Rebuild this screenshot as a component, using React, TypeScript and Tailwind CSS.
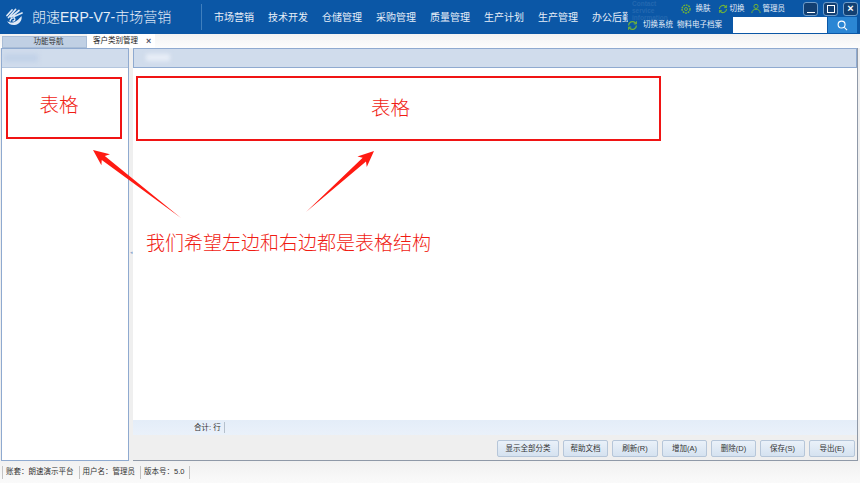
import React from "react";

const nav = ["市场营销", "技术开发", "仓储管理", "采购管理", "质量管理", "生产计划", "生产管理", "办公后勤"];
const btns: [string, number][] = [
  ["显示全部分类", 62], ["帮助文档", 45], ["刷新(R)", 46], ["增加(A)", 45], ["删除(D)", 45], ["保存(S)", 45], ["导出(E)", 46],
];
const font = { fontFamily: '"Liberation Sans","Noto Sans CJK SC",sans-serif' };

function Logo() {
  return (
    <svg width="18" height="18" viewBox="0 0 18 18" fill="none" stroke="#dfe9f6" strokeLinecap="round">
      <path d="M1 7.500L6 2M2.500 9.500L9.500 1.500M5 9L13 2.500M8 8.500L16 5" strokeWidth="1.700" />
      <path d="M15.500 8c1 4-2 8.500-7 9-3.500.3-6.500-1.500-7.500-4 2 1.500 5 2 7.500 1 2.500-1 4.500-3 7-6z" fill="#dfe9f6" stroke="none" />
      <path d="M4 13c.5-2.500 2.500-3.500 4.500-3 1 1.500 0 3-1.500 3" strokeWidth="1.300" />
    </svg>
  );
}

function Refresh({ size = 12 }: { size?: number }) {
  return (
    <svg className="shrink-0" width={size} height={size} viewBox="0 0 14 14" fill="none" stroke="#6fb23a" strokeWidth="1.600">
      <path d="M2 7a5 5 0 0 1 8.500-3.500L12 5M12 7a5 5 0 0 1-8.500 3.500L2 9" />
      <path d="M12 1.500V5H8.500M2 12.500V9h3.500" strokeWidth="1.200" />
    </svg>
  );
}

function WinBtn({ children }: { children: React.ReactNode }) {
  return (
    <div className="flex h-[14px] w-[15px] items-center justify-center rounded-[3px] border border-[#6f9cc9] bg-[#123f72]">
      {children}
    </div>
  );
}

function Arrow({ x1, y1, x2, y2 }: { x1: number; y1: number; x2: number; y2: number }) {
  const dx = x2 - x1;
  const dy = y2 - y1;
  const len = Math.hypot(dx, dy);
  const ux = dx / len;
  const uy = dy / len;
  const px = -uy;
  const py = ux;
  const p = (a: number, b: number) => `${x2 - ux * a + px * b},${y2 - uy * a + py * b}`;
  return <polygon points={`${x1},${y1} ${p(13, 2.5)} ${p(16, 7)} ${x2},${y2} ${p(16, -7)} ${p(13, -2.5)}`} fill="#ff1a12" />;
}

export default function App() {
  return (
    <div className="relative flex h-[483px] w-[860px] flex-col overflow-hidden bg-[#efefef]" style={font}>
      {/* Header */}
      <header className="relative flex h-[34px] shrink-0 items-center bg-[#0b57a6] text-white">
        <div className="absolute left-[632px] top-0 w-[42px] text-[6.500px] font-bold leading-[7px] text-[#2368b0]">
          Contact service information
        </div>
        <div className="ml-[6px] flex w-[195px] items-center gap-[8px]">
          <Logo />
          <span className="whitespace-nowrap text-[14px] font-light leading-none text-[#e6eef8]">朗速ERP-V7-市场营销</span>
        </div>
        <div className="h-[26px] w-px bg-[#3f7fbe]" />
        <nav className="ml-[12px] flex w-[414px] shrink-0 gap-[14px] overflow-hidden whitespace-nowrap text-[10px] text-[#e6eef8]">
          {nav.map((n) => (
            <span key={n} className="w-[40px] shrink-0">{n}</span>
          ))}
        </nav>
        <div className="relative flex h-full min-w-0 flex-1 flex-col items-end whitespace-nowrap pt-[1px]">
          <div className="flex h-[15px] items-center pr-[2px] text-[7.500px] text-[#e6eef8]">
            <svg className="shrink-0" width="10" height="10" viewBox="0 0 10 10" fill="none" stroke="#6fb23a">
              <circle cx="5" cy="5" r="4" strokeWidth="1.500" strokeDasharray="1.800 0.800" />
              <circle cx="5" cy="5" r="1.500" strokeWidth="1" />
            </svg>
            <span className="ml-[5px]">换肤</span>
            <span className="ml-[7px]"><Refresh size={10} /></span>
            <span className="ml-[2px]">切换</span>
            <svg className="ml-[6px] shrink-0" width="10" height="11" viewBox="0 0 12 12" fill="none" stroke="#6fb23a" strokeWidth="1.200">
              <circle cx="6" cy="3.500" r="2.500" />
              <path d="M1 11.500c0-3 2-4.500 5-4.500s5 1.500 5 4.500" />
            </svg>
            <span className="ml-[2px]">管理员</span>
            <div className="ml-[18px] flex gap-[5px]">
              <WinBtn><span className="mt-[7px] h-px w-[8px] bg-white" /></WinBtn>
              <WinBtn><span className="h-[8px] w-[8px] border border-white" /></WinBtn>
              <WinBtn><span className="text-[11px] font-bold leading-none text-white">×</span></WinBtn>
            </div>
          </div>
          <div className="mt-[1px] flex h-[16px] items-center pr-[3px] text-[7.500px] text-[#e6eef8]">
            <Refresh size={11} />
            <span className="ml-[5px]">切换系统</span>
            <span className="ml-[4px]">物料电子档案</span>
            <div className="ml-[11px] h-[16px] w-[94px] shrink-0 bg-white" />
            <div className="ml-px flex h-[16px] w-[29px] shrink-0 items-center justify-center bg-[#2b86d4]">
              <svg width="11" height="11" viewBox="0 0 12 12" fill="none" stroke="white" strokeWidth="1.200">
                <circle cx="5" cy="5" r="3.800" />
                <path d="M8 8l3 3" />
              </svg>
            </div>
          </div>
        </div>
      </header>

      {/* Tabs */}
      <div className="flex h-[14px] shrink-0 items-end bg-gradient-to-b from-[#f2f2f2] to-[#fdfdfd] pl-[2px]">
        <div className="flex h-[12px] w-[85px] items-center justify-center border border-[#a9bdd6] bg-[#c0d0e4] pl-[8px] text-[7.500px] text-[#333]">
          功能导航
        </div>
        <div className="flex h-[14px] w-[68px] items-center bg-white pl-[6px] text-[7.500px] text-[#222]">
          <span className="whitespace-nowrap">客户类别管理</span>
          <span className="ml-[8px] text-[9px] font-bold leading-none text-[#556]">×</span>
        </div>
      </div>

      {/* Body */}
      <main className="flex min-h-0 flex-1">
        <aside className="ml-px flex w-[128px] shrink-0 flex-col border border-[#8faad0] bg-white">
          <div className="h-[19px] shrink-0 border-b border-[#b4c6de] bg-[#d0dcec]">
            <div className="ml-[2px] mt-[5px] h-[8px] w-[34px] bg-[#c2d2e8] blur-[2px]" />
          </div>
        </aside>
        <div className="flex w-[4px] items-center justify-center">
          <span className="mt-[-4px] text-[5px] leading-none text-[#8faad0]">◂</span>
        </div>
        <section className="flex min-w-0 flex-1 flex-col border-b border-r border-[#8f99a8]">
          <div className="h-[20px] shrink-0 border border-[#8faad0] bg-[#d0dcec] pl-[12px] pt-[5px]">
            <div className="h-[7px] w-[24px] bg-[#e8eef7] blur-[2px]" />
          </div>
          <div className="min-h-0 flex-1 bg-white" />
          <div className="flex h-[15px] shrink-0 items-center bg-gradient-to-b from-[#e4edf8] to-[#eaf1fa] pl-[61px] text-[7.500px] text-[#333]">
            <span>合计: 行</span>
            <span className="ml-[3px] h-[11px] w-px bg-[#b5c0cc]" />
          </div>
          <div className="flex h-[25px] shrink-0 items-center justify-end gap-[4px] bg-[#efefef] pr-[2px] pt-[2px]">
            {btns.map(([t, w]) => (
              <button
                key={t}
                style={{ width: w }}
                className="h-[17px] rounded-[2px] border border-[#b6c6d9] bg-gradient-to-b from-[#eaf1f9] to-[#d5e2f0] text-[7.500px] leading-none text-[#333]"
              >
                {t}
              </button>
            ))}
          </div>
        </section>
        <div className="w-[2px] shrink-0" />
      </main>

      {/* Status bar */}
      <footer className="flex h-[22px] shrink-0 items-center bg-gradient-to-b from-[#f1f1f1] to-[#fafafa] pl-[2px] text-[7.500px] text-[#333]">
        <div className="flex h-[13px] items-center border-l border-[#c4c4c4] pl-[3px] pr-[5px]">账套：朗速演示平台</div>
        <div className="flex h-[13px] items-center border-l border-[#c4c4c4] pl-[3px] pr-[5px]">用户名：管理员</div>
        <div className="flex h-[13px] items-center border-x border-[#c4c4c4] pl-[3px] pr-[5px]">版本号：5.0</div>
      </footer>

      {/* Red annotations */}
      <div className="absolute left-[6px] top-[77px] flex h-[62px] w-[116px] items-center justify-center border-2 border-[#f01414] pb-[5px] pr-[10px] text-[19.500px] font-light text-[#f01c14]">
        表格
      </div>
      <div className="absolute left-[136px] top-[76px] flex h-[65px] w-[525px] items-center justify-center border-2 border-[#f01414] pr-[16px] text-[19.500px] font-light text-[#f01c14]">
        表格
      </div>
      <svg className="pointer-events-none absolute left-0 top-0" width="860" height="483">
        <Arrow x1={181} y1={218} x2={93} y2={150} />
        <Arrow x1={306} y1={212} x2={374} y2={151} />
      </svg>
      <div className="absolute left-[146px] top-[232px] whitespace-nowrap text-[19px] font-light leading-[24px] text-[#f01c14]">
        我们希望左边和右边都是表格结构
      </div>
    </div>
  );
}
